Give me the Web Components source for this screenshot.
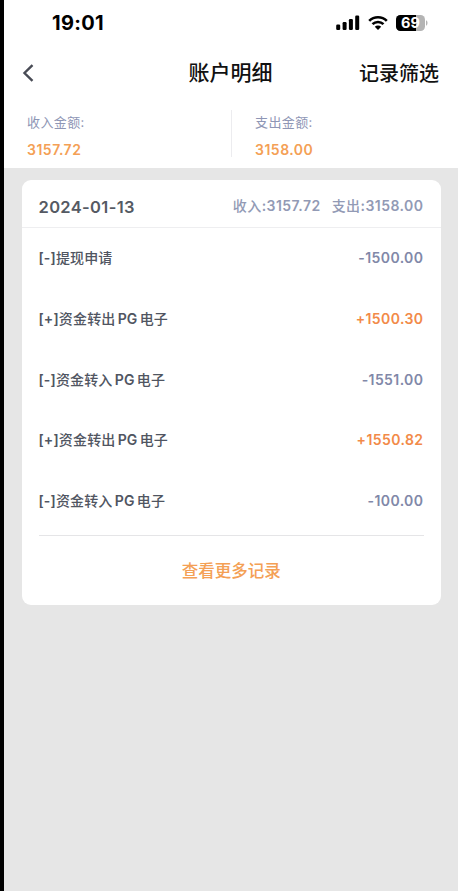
<!DOCTYPE html>
<html lang="zh-CN">
<head>
<meta charset="utf-8">
<title>账户明细</title>
<style>
html,body{margin:0;height:100%}
body{font-family:Inter,"Noto Sans CJK SC",sans-serif;background:#e6e6e6;overflow:hidden}
</style>
</head>
<body>
<account-page></account-page>
<script>
const define=(name,html,setup)=>customElements.define(name,class extends HTMLElement{
  connectedCallback(){
    if(this.shadowRoot)return;
    const t=document.createElement('template');
    t.innerHTML=html;
    this.attachShadow({mode:'open'}).append(t.content.cloneNode(true));
    if(setup)setup(this,this.shadowRoot);
  }
});

define('status-bar',`<style>
:host{display:flex;height:45px;box-sizing:border-box;padding:0 30px 0 48px;align-items:center;justify-content:space-between;color:#000}
.time{font-size:20px;font-weight:700;letter-spacing:.3px;line-height:24px}
.icons{display:flex;align-items:center;height:20px}
svg{display:block}
.battery{position:relative;width:32px;height:16px;margin-left:8px}
.level{position:absolute;left:0;top:0;width:29px;height:16px;text-align:center;font-size:14.5px;line-height:16px;font-weight:700;color:#fff}
</style>
<span class="time">19:01</span>
<div class="icons">
<svg width="24" height="16" viewBox="0 0 24 16"><rect x="0.2" y="9.5" width="4" height="5.5" rx="1.2"/><rect x="6.6" y="7" width="4" height="8" rx="1.2"/><rect x="12.9" y="4" width="4" height="11" rx="1.2"/><rect x="19.2" y="0.6" width="4" height="14.4" rx="1.2"/></svg>
<svg width="20" height="16" viewBox="0 0 20 16" style="margin-left:8px"><g fill="none" stroke="#000" stroke-width="2.6"><path d="M1.2 5.9a12.4 12.4 0 0 1 17.6 0"/><path d="M4.5 9.2a7.8 7.8 0 0 1 11 0"/></g><path d="M6.8 11.7a4.6 4.6 0 0 1 6.4 0L10 15z"/></svg>
<div class="battery"><svg width="32" height="16" viewBox="0 0 32 16"><defs><clipPath id="c"><rect width="29" height="16" rx="4.5"/></clipPath></defs><g clip-path="url(#c)"><rect width="29" height="16" fill="#b4b4b4"/><rect width="20" height="16"/></g><path d="M30 5.3c2 .6 2 4.8 0 5.4z" fill="#b4b4b4"/></svg><span class="level">69</span></div>
</div>`);

define('nav-bar',`<style>
:host{display:grid;grid-template-columns:1fr auto 1fr;align-items:center;height:55px;padding:0 19px 0 18px;color:#111}
svg{display:block}
.title{font-size:21px;font-weight:500;line-height:30px}
.action{justify-self:end;font-size:20px;font-weight:500;line-height:30px;padding-top:2px}
</style>
<svg width="12" height="18" viewBox="0 0 12 18"><path d="M10.5 1.2 2.5 9l8 7.8" fill="none" stroke="#484b55" stroke-width="2.4"/></svg>
<span class="title"><slot name="title"></slot></span><span class="action"><slot name="action"></slot></span>`);

define('total-cell',`<style>
:host{display:flex;flex-direction:column;padding-left:23px}
.label{font-size:13px;line-height:20px;height:20px;color:#8e96b5;letter-spacing:.4px}
.value{font-size:14px;line-height:20px;font-weight:600;color:#f4a055;margin-top:7.5px;letter-spacing:.5px}
</style><span class="label"><slot name="label"></slot></span><span class="value"><slot></slot></span>`);

define('totals-bar',`<style>
:host{display:grid;grid-template-columns:227px 1px 1fr;height:68px;box-sizing:border-box;padding-top:12px}
i{background:#ececef;height:47px;margin-top:-2px}
</style><slot name="in"></slot><i></i><slot name="out"></slot>`);

define('record-row',`<style>
:host{display:flex;align-items:center;justify-content:space-between;height:60.67px;padding:0 18px 0 17px}
.name{font-size:14px;line-height:20px;color:#505561;letter-spacing:.15px;word-spacing:-1.7px;white-space:pre;margin-top:1px}
.amount{font-size:14px;font-weight:600;color:#8188a8;letter-spacing:.4px;margin-right:-.4px}
:host([income]) .amount{color:#f28a48}
</style><span class="name"><slot></slot></span><span class="amount"></span>`,(h,r)=>{r.querySelector('.amount').textContent=h.getAttribute('amount')});

define('day-card',`<style>
:host{display:block;box-sizing:border-box;width:419.5px;height:425px;margin:12px 0 0 17.5px;background:#fff;border-radius:9px}
header{display:flex;align-items:center;justify-content:space-between;height:47.5px;box-sizing:border-box;padding:6px 18px 0 17px;border-bottom:1.5px solid #eeeef0}
.date{font-size:16.5px;font-weight:600;color:#555a63;letter-spacing:.35px;padding-top:2px}
.sum{display:flex;gap:11px;font-size:14px;line-height:20px;color:#929ab5;letter-spacing:.45px;margin:-1px -.45px 0 0}
::slotted(record-row){font-weight:500}
.sum ::slotted(span){font-weight:600}
.more{margin:4px 17px 0;border-top:1px solid #e5e5e7;height:69px;display:flex;align-items:center;justify-content:center;color:#f4a055;font-size:16.5px;font-weight:500}
</style>
<header><span class="date"><slot name="date"></slot></span><span class="sum"><slot name="income"></slot><slot name="outgo"></slot></span></header>
<div><slot></slot></div>
<div class="more"><slot name="more"></slot></div>`);

define('account-page',`<style>
:host{display:block;box-sizing:border-box;height:891px;border-left:4px solid #000;background:#e6e6e6}
.top{background:#fff;height:168px}
b{font-weight:600}
em{font-style:normal;font-weight:500}
</style>
<div class="top">
<status-bar></status-bar>
<nav-bar><span slot="title">账户明细</span><span slot="action">记录筛选</span></nav-bar>
<totals-bar><total-cell slot="in"><span slot="label">收入金额:</span>3157.72</total-cell><total-cell slot="out"><span slot="label">支出金额:</span>3158.00</total-cell></totals-bar>
</div>
<day-card>
<span slot="date">2024-01-13</span><span slot="income"><em>收入</em>:3157.72</span><span slot="outgo"><em>支出</em>:3158.00</span>
<record-row amount="-1500.00"><b>[-]</b>提现申请</record-row>
<record-row amount="+1500.30" income><b>[+]</b>资金转出 <b>PG</b> 电子</record-row>
<record-row amount="-1551.00"><b>[-]</b>资金转入 <b>PG</b> 电子</record-row>
<record-row amount="+1550.82" income><b>[+]</b>资金转出 <b>PG</b> 电子</record-row>
<record-row amount="-100.00"><b>[-]</b>资金转入 <b>PG</b> 电子</record-row>
<span slot="more">查看更多记录</span>
</day-card>`);
</script>
</body>
</html>
